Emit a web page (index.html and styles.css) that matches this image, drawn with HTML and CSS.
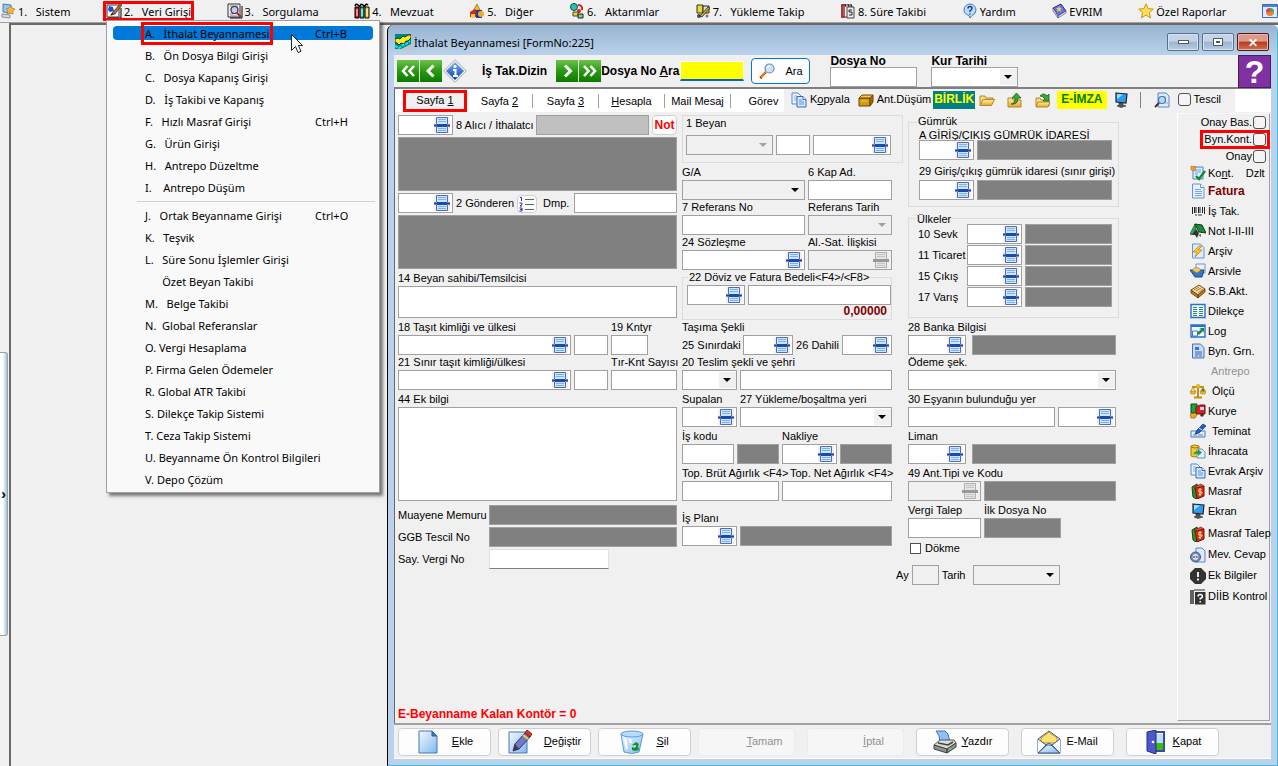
FILE: index.html
```html
<!DOCTYPE html>
<html lang="tr">
<head>
    <meta charset="UTF-8">
    <meta name="viewport" content="width=device-width, initial-scale=1.0">
    <title>İthalat Beyannamesi</title>
    <link rel="stylesheet" href="styles.css">
</head>
<body>
    <svg class="sprite" aria-hidden="true">
        <defs>
            <linearGradient id="g-green" x1="0" y1="0" x2="0" y2="1"><stop offset="0" stop-color="#6cc24a"/><stop offset=".5" stop-color="#2a9a12"/><stop offset="1" stop-color="#0b7a00"/></linearGradient>
            <linearGradient id="g-sky" x1="0" y1="0" x2="1" y2="1"><stop offset="0" stop-color="#f4faff"/><stop offset="1" stop-color="#7db8f0"/></linearGradient>
            <linearGradient id="g-gold" x1="0" y1="0" x2="0" y2="1"><stop offset="0" stop-color="#fff1a8"/><stop offset="1" stop-color="#e2a82c"/></linearGradient>
            <linearGradient id="g-blue" x1="0" y1="0" x2="0" y2="1"><stop offset="0" stop-color="#7ab2f2"/><stop offset="1" stop-color="#0b3fa8"/></linearGradient>
        </defs>
        <symbol id="i-pick" viewBox="0 0 16 16"><path d="M0 0h16v16H0z" fill="#f0f0f0"/><path d="M2.500 .5h11v15h-11z" fill="#cfe6fb" stroke="#5468b4"/><path d="M4 2.500h8M4 4.500h8M4 11.500h8M4 13.500h8" stroke="#74b4ee"/><path d="M0 7h16v3H0z" fill="#6c86c8"/><path d="M0 8h16v1H0z" fill="#1e49a8"/><path d="M3 7h10v3H3z" fill="#1e49a8"/></symbol>
        <symbol id="i-pick-off" viewBox="0 0 16 16"><path d="M2.500 .5h11v15h-11z" fill="#e4e4e4" stroke="#b0b0b0"/><path d="M4 2.500h8M4 4.500h8M4 11.500h8M4 13.500h8" stroke="#c4c4c4"/><path d="M0 7h16v3H0z" fill="#999"/></symbol>
        <symbol id="i-server" viewBox="0 0 16 16"><path d="M3 1l8 1v8l-8-1z" fill="#8fc8f4" stroke="#4a80b4"/><path d="M2 11l8 1v3l-8-1z" fill="#d8dee8" stroke="#8090a0"/><path d="M11 3l1 2 3 1-2 2 0 3-3-1-3 1 1-3-2-2 3-1z" fill="#f6b83c" stroke="#a86c10" stroke-width=".6"/></symbol>
        <symbol id="i-write" viewBox="0 0 16 16"><path d="M1 2h12v12H1z" fill="#fff" stroke="#333"/><path d="M2 15h13V5" fill="none" stroke="#000"/><path d="M3 3l4 1 1 4-4 1-2-2z" fill="#2448c8"/><path d="M5 12l2-3 7-8 2 1-7 9z" fill="#b06a40" stroke="#501c08" stroke-width=".7"/><path d="M4 13l2-3 2 1z" fill="#222"/></symbol>
        <symbol id="i-query" viewBox="0 0 16 16"><path d="M1 1h12v13H1z" fill="#eee" stroke="#333"/><path d="M3 15h12V3" fill="none" stroke="#000"/><path d="M3 3h8M3 11h3M3 13h7" stroke="#888"/><circle cx="7.500" cy="7" r="3.500" fill="#c4c8f4" stroke="#333" stroke-width="1.200"/><path d="M10 10l4 4" stroke="#b02040" stroke-width="2"/></symbol>
        <symbol id="i-books" viewBox="0 0 16 16"><path d="M1 4h4v11H1z" fill="#e01010" stroke="#000"/><path d="M6 4h4v11H6z" fill="#20b0b0" stroke="#000"/><path d="M11 4h4v11h-4z" fill="#e8d020" stroke="#000"/><path d="M1 3q1-3 3-1t2 1q1-3 3-1t2 1q1-3 3-1" fill="none" stroke="#000" stroke-width="1.500"/><path d="M3 6v7M8 6v7M13 6v7" stroke="#fff"/></symbol>
        <symbol id="i-other" viewBox="0 0 16 16"><path d="M4 8l4-7 3 6z" fill="#f0c020" stroke="#705000" stroke-width=".6"/><path d="M1 14V9l5-3 4 3v5z" fill="#d02818"/><path d="M7 7h6v8H7z" fill="#2438b0"/><circle cx="12" cy="11" r="3" fill="#e8b020"/><path d="M2 11h4v4H2z" fill="#f0d040"/></symbol>
        <symbol id="i-transfer" viewBox="0 0 16 16"><circle cx="5" cy="4" r="3.500" fill="#30c0b0" stroke="#105050"/><path d="M9 2q5 0 4 5" fill="none" stroke="#d02020" stroke-width="2"/><circle cx="10" cy="8" r="2" fill="#e02020"/><path d="M4 9h5v4H4z" fill="#f0d030" stroke="#444"/><path d="M9 11h5v4H9z" fill="#80d090" stroke="#222"/></symbol>
        <symbol id="i-load" viewBox="0 0 16 16"><path d="M2 2h6v8H2z" fill="#e8d830" stroke="#333"/><path d="M8 3h6v7H8z" fill="#ddd" stroke="#222"/><path d="M5 13l8-9 2 1-8 9z" fill="#c8b020" stroke="#222" stroke-width=".8"/><circle cx="4" cy="13" r="2" fill="#444"/><circle cx="12" cy="13" r="1.500" fill="#777"/></symbol>
        <symbol id="i-calendar" viewBox="0 0 16 16"><path d="M2 2h9v12H2z" fill="#fff" stroke="#7c1818"/><path d="M2 1v14M4 1v14" stroke="#a02020" stroke-width="1.500"/><path d="M7 4h7v11H7z" fill="#eee" stroke="#444"/><path d="M12 7H9v2h3v3H9" fill="none" stroke="#222"/><path d="M5 1l1 3M8 1l1 3M11 1l1 3" stroke="#222"/></symbol>
        <symbol id="i-help" viewBox="0 0 16 16"><path d="M8 1a6 6 0 016 6q0 4-4 5.500L8 15l-1-2.500Q2 11 2 7a6 6 0 016-6z" fill="#b8dcfa" stroke="#4a7ab0"/><path d="M6 5.500q0-2 2-2t2 1.800Q10 6.500 8 8v1M8 10.500v1" fill="none" stroke="#1a3c90" stroke-width="1.500"/></symbol>
        <symbol id="i-evrim" viewBox="0 0 16 16"><path d="M2 5l8-4 5 7-8 5z" fill="#6a72d8" stroke="#2c3080"/><path d="M2 5l5 8v2L2 8zM7 13l8-5v2l-8 5z" fill="#e8e8f4" stroke="#404080" stroke-width=".6"/><path d="M8 3l1 2 2 .5-1.500 1L10 9 8 7.500 6 9l.5-2.500L5 5.500 7.200 5z" fill="#f0d060"/></symbol>
        <symbol id="i-star" viewBox="0 0 16 16"><path d="M8 .8l2.100 4.900 5.200.4-4 3.500 1.300 5.300L8 12l-4.600 2.900 1.300-5.300-4-3.500 5.200-.4z" fill="#ffe058" stroke="#d09018"/></symbol>
        <symbol id="i-chart" viewBox="0 0 16 16"><path d="M.5 1.500h15v13H.5z" fill="#dcecfc" stroke="#3a6cb8"/><path d="M1 2h14v2H1z" fill="#4a84d8"/><circle cx="8" cy="9" r="4" fill="#f08030"/><path d="M8 9V5a4 4 0 014 4z" fill="#40b040"/><path d="M8 9H4a4 4 0 014-4z" fill="#d04080"/></symbol>
        <symbol id="i-app" viewBox="0 0 16 16"><path d="M0 0h16v15H0z" fill="#008888"/><path d="M4 16l12-6v6z" fill="#c4c4c4"/><path d="M0 8V5l3-1 2 1 3-3 2 1 3-2 3 0v3l-3 3h-2l-2 3-3-1-2 2-2-2z" fill="#f4ec20" stroke="#101010" stroke-width=".8"/><path d="M0 12l4 2 4-3 3-1 4-3" stroke="#20e0f0" stroke-width="2" fill="none" stroke-dasharray="3 1"/></symbol>
        <symbol id="i-prev2" viewBox="0 0 22 22"><path d="M0 0h22v22H0z" fill="url(#g-green)"/><path d="M10.500 6L6 11l4.500 5M17 6l-4.500 5 4.500 5" fill="none" stroke="#fff" stroke-width="2.600"/></symbol>
        <symbol id="i-prev" viewBox="0 0 22 22"><path d="M0 0h22v22H0z" fill="url(#g-green)"/><path d="M13.500 5.500L8 11l5.500 5.500" fill="none" stroke="#fff" stroke-width="3"/></symbol>
        <symbol id="i-next" viewBox="0 0 22 22"><path d="M0 0h22v22H0z" fill="url(#g-green)"/><path d="M9 5.500l5.500 5.500L9 16.500" fill="none" stroke="#fff" stroke-width="3"/></symbol>
        <symbol id="i-next2" viewBox="0 0 22 22"><path d="M0 0h22v22H0z" fill="url(#g-green)"/><path d="M5 6l4.500 5L5 16M11.500 6l4.500 5-4.500 5" fill="none" stroke="#fff" stroke-width="2.600"/></symbol>
        <symbol id="i-info" viewBox="0 0 24 24"><path d="M12 .7L23.300 12 12 23.300.7 12z" fill="#f2f2f2" stroke="#a8a8a8"/><path d="M12 3l9 9-9 9-9-9z" fill="url(#g-blue)"/><circle cx="12" cy="7.500" r="1.600" fill="#fff"/><path d="M10 11h2.500v6M10 17h5" stroke="#fff" stroke-width="2" fill="none"/></symbol>
        <symbol id="i-zoom" viewBox="0 0 16 16"><path d="M1 15l6-6" stroke="#e07818" stroke-width="2.500"/><path d="M1 14l2 2" stroke="#803808"/><circle cx="10.500" cy="5.500" r="4.500" fill="#c4e4fa" stroke="#7088b0" stroke-width="1.200"/><path d="M8 5q1-2 3-2" stroke="#fff" fill="none" stroke-width="1.500"/></symbol>
        <symbol id="i-copy" viewBox="0 0 16 16"><path d="M1 1h6l3 3v8H1z" fill="#eaf3ff" stroke="#5a86c8"/><path d="M3 4h3M3 6h4M3 8h3" stroke="#88b0e4"/><path d="M6 4.500h6l3 3V15H6z" fill="#d8e8fc" stroke="#3c68b0"/><path d="M12 4.500v3h3" fill="#fff" stroke="#3c68b0"/><path d="M8 8h3M8 10h5M8 12h5" stroke="#5a90d8"/></symbol>
        <symbol id="i-box" viewBox="0 0 16 16"><path d="M1 6h11v8H1z" fill="#d49a10" stroke="#6c4400"/><path d="M1 6l3-3h11l-3 3z" fill="#f4c848" stroke="#6c4400"/><path d="M12 6l3-3v7l-3 4z" fill="#a46c08" stroke="#6c4400"/><path d="M3 9h7" stroke="#f0c050"/></symbol>
        <symbol id="i-folder" viewBox="0 0 16 16"><path d="M1 13V4h5l1 2h7v2" fill="#f8dc84" stroke="#b88420"/><path d="M1 13.500l3-6h11.500l-3 6z" fill="url(#g-gold)" stroke="#b88420"/></symbol>
        <symbol id="i-folder-up" viewBox="0 0 16 16"><path d="M1 15V6h4l1 2h8v7z" fill="url(#g-gold)" stroke="#b88420"/><path d="M4 12q4 0 4-6H5l4.500-5L14 6h-3q0 7-7 6z" fill="#38a838" stroke="#186018" stroke-width=".8"/></symbol>
        <symbol id="i-folder-in" viewBox="0 0 16 16"><path d="M1 14V6h4l1 2h8v6z" fill="#f8dc84" stroke="#b88420"/><path d="M1 15l2-5h12l-2 5z" fill="url(#g-gold)" stroke="#b88420"/><path d="M5 4q4-4 7 0l2-2v7H8l2-2Q8 4 5 4z" fill="#38a838" stroke="#186018" stroke-width=".8"/></symbol>
        <symbol id="i-monitor" viewBox="0 0 16 16"><path d="M3 1l11 1-1 9-10-1z" fill="#2c9cf0" stroke="#222" stroke-width="1.200"/><path d="M4 2l6 .5L4 7z" fill="#9cdcff"/><path d="M6 11h4v2l3 1-5 1.500-4-1.500 2-1z" fill="#555" stroke="#333" stroke-width=".6"/></symbol>
        <symbol id="i-preview" viewBox="0 0 16 16"><path d="M4 1h8l3 3v11H4z" fill="#dcebfc" stroke="#5a86c8"/><path d="M7 5h5M11 11h3" stroke="#88b0e4"/><circle cx="8" cy="8" r="3.500" fill="#b4d8f8" stroke="#4c74b0" stroke-width="1.200"/><path d="M1 15l4-4" stroke="#4c3018" stroke-width="2"/></symbol>
        <symbol id="i-list" viewBox="0 0 16 16"><path d="M1 1.500h1.500V5M.5 7H3v1.500L1 10h2M.5 12H3v1.500H1.500H3V15H.5" fill="none" stroke="#2030b0"/><path d="M6 3.500h9M6 8.500h9M6 13.500h9" stroke="#5c6068"/></symbol>
        <symbol id="i-check" viewBox="0 0 16 16"><path d="M3 2h10v12H3z" fill="#dcecff" stroke="#4a80d0"/><path d="M5 5h6M5 7h6M5 9h3" stroke="#74a4e4"/><path d="M1 1l5 1-1 4-2-1-2 0z" fill="#f4a020" stroke="#a86010" stroke-width=".5"/><path d="M6 11l3 3 6-8" stroke="#128828" stroke-width="2.400" fill="none"/></symbol>
        <symbol id="i-page" viewBox="0 0 16 16"><path d="M2.500 1h8l3.500 3.500V15H2.500z" fill="#e6f0ff" stroke="#6c94d0"/><path d="M10.500 1v3.500H14" fill="#fff" stroke="#6c94d0"/><path d="M5 6.500h6M5 8.500h7M5 10.500h7M5 12.500h7" stroke="#7ca8e4"/></symbol>
        <symbol id="i-barcode" viewBox="0 0 16 16"><path d="M2.500 4v7M4.500 4v6M6 4v6M8.500 4v6M10 4v6M12.500 4v6M14.500 4v7" stroke="#222"/><path d="M5 12h2M8 12h4" stroke="#333"/></symbol>
        <symbol id="i-note" viewBox="0 0 16 16"><path d="M5 1l7 1 4 8-7-1z" fill="#1c8c40" stroke="#043c14"/><path d="M5 1L0 11l2 1 4-6z" fill="#30a450" stroke="#043c14" stroke-width=".6"/><path d="M2 12l4-6 3 4-2 5-2-3z" fill="#333"/><path d="M8 12l3-1v3z" fill="#666"/></symbol>
        <symbol id="i-flash" viewBox="0 0 16 16"><path d="M2.500 1h8l3.500 3.500V15H2.500z" fill="#dceaff" stroke="#6c94d0"/><path d="M9 3l-6 6h4l-2 5 7-7H8l4-4z" fill="#ffc828" stroke="#c07808" stroke-width=".7"/></symbol>
        <symbol id="i-archive" viewBox="0 0 16 16"><path d="M6 1h9v9H6z" fill="#e8f2ff" stroke="#6c94d0"/><path d="M0 7h14l-2 7H5z" fill="#3878c8" stroke="#184888"/><path d="M2 7q5-5 9 0l-4 3z" fill="#f4c858" stroke="#a07020" stroke-width=".6"/></symbol>
        <symbol id="i-card" viewBox="0 0 16 16"><path d="M1 7l8-5 6 4-7 6z" fill="#f4dca0" stroke="#7c4c10"/><path d="M1 7l7 5v3L1 10zM8 12l7-6v3l-7 6z" fill="#c07c20" stroke="#6c3c08" stroke-width=".8"/><path d="M4 7l5-3M6 8l5-3M8 10l5-4" stroke="#a87c40"/></symbol>
        <symbol id="i-sheet" viewBox="0 0 16 16"><path d="M1 1.500h14v13H1z" fill="#eef6ff" stroke="#2870c0" stroke-width="1.400"/><path d="M3 4.500h4M3 6.500h4M3 8.500h4M3 10.500h4M3 12.500h4M9 4.500h4M9 6.500h4M9 8.500h4M9 10.500h4M9 12.500h4" stroke="#2c9060" stroke-width="1.200"/></symbol>
        <symbol id="i-log" viewBox="0 0 16 16"><path d="M1 2h14v12H1z" fill="#f4faff" stroke="#2c70c8" stroke-width="1.400"/><path d="M1 2h14v2H1z" fill="#2c70c8"/><path d="M2.500 8h5v5h-5z" fill="#fff" stroke="#3878c8"/><path d="M7 10l4-4-2-1h5v5l-1-2-4 4z" fill="#188c50"/></symbol>
        <symbol id="i-form" viewBox="0 0 16 16"><path d="M2.500 1h8l3.500 3.500V15H2.500z" fill="#c8dcf8" stroke="#4870b0"/><path d="M5 4h4v3H5z" fill="#4870c0"/><path d="M5 9h7M5 11h7M5 13h3M9 13h3" stroke="#3860b0"/></symbol>
        <symbol id="i-scale" viewBox="0 0 16 16"><path d="M8 1v13M4 14.500h8M2 4h12" stroke="#c48c10" stroke-width="2"/><path d="M3 4L.5 9h5zM13 4l-2.500 5h5z" fill="none" stroke="#c89820"/><path d="M0 8h6l-1 3H1zM10 8h6l-1 3h-4z" fill="#eab828" stroke="#a07008" stroke-width=".5"/><circle cx="8" cy="3" r="2" fill="#eab828"/><circle cx="13" cy="7" r="1.500" fill="#389030"/></symbol>
        <symbol id="i-truck" viewBox="0 0 16 16"><path d="M1 1h6v9H1z" fill="#20a040" stroke="#084818"/><path d="M6 4l4-2h5v9H6z" fill="#d82020" stroke="#701010"/><path d="M10 4h4v3h-4z" fill="#b8d8f0"/><circle cx="12" cy="12" r="1.800" fill="#333"/><path d="M0 11l5-1 2 2-2 3H1z" fill="#e8b020" stroke="#906008" stroke-width=".7"/></symbol>
        <symbol id="i-cheque" viewBox="0 0 16 16"><path d="M1 8h14v6H1z" fill="#e4effc" stroke="#4878b8"/><path d="M3 12h4M8 12h5" stroke="#5080c0"/><path d="M5 11l2-4 6-6 3 2-7 7z" fill="#2060c0" stroke="#102c70" stroke-width=".7"/><path d="M9 5l3 2" stroke="#cfe0ff"/></symbol>
        <symbol id="i-export" viewBox="0 0 16 16"><path d="M1 3q3-2 8 0v10q-5 2-8 0z" fill="#f4c838" stroke="#a87808"/><path d="M1 4q4 2 8 0" fill="none" stroke="#a87808"/><path d="M7 6h5l3 3v6H7z" fill="#e4effc" stroke="#6890c8"/><path d="M3 12q1-4 5-4V6l4 3.500L8 13v-2q-3-1-5 1z" fill="#2c9c38"/></symbol>
        <symbol id="i-ledger" viewBox="0 0 16 16"><path d="M2 4l5-3 2 11-3 4-3-2z" fill="#2c9430" stroke="#104c14"/><path d="M5 5l9-2v10l-7 3z" fill="#d02c1c" stroke="#70100c"/><path d="M4 4l7-3 3 2-9 2z" fill="#e8503c" stroke="#70100c" stroke-width=".6"/><path d="M11.500 6.500q-3-1-3 1t2.500 1.500-.5 2.500l-2 0M10 5v8" stroke="#ffe890" fill="none"/></symbol>
        <symbol id="i-disc" viewBox="0 0 16 16"><path d="M6 1h6l3 3v11H6z" fill="#dceaff" stroke="#5a86c8"/><circle cx="5.500" cy="10" r="5" fill="#7c8cb8" stroke="#48547c"/><circle cx="5.500" cy="10" r="2.500" fill="#c8d0e8" stroke="#fff" stroke-width=".8"/><path d="M4 9v2M7 9v2" stroke="#333"/></symbol>
        <symbol id="i-alert" viewBox="0 0 16 16"><path d="M5 0h6l5 5v6l-5 5H5l-5-5V5z" fill="#333"/><path d="M8 4v5M8 10.500v2" stroke="#fff" stroke-width="1.800"/></symbol>
        <symbol id="i-diib" viewBox="0 0 16 16"><path d="M1 1v14M3 1v14" stroke="#333" stroke-width="1.500"/><path d="M5 3h10.500v12.500H5z" fill="#333"/><path d="M4 1h11" stroke="#333"/><path d="M8 7.500q0-2 2.200-2t2.200 1.800-2.200 2.200v1M10.200 12v1.500" fill="none" stroke="#fff" stroke-width="1.500"/></symbol>
        <symbol id="i-new" viewBox="0 0 24 24"><path d="M3 1h13l5 5v17H3z" fill="url(#g-sky)" stroke="#4a72b8"/><path d="M16 1v5h5z" fill="#3c78d0" stroke="#3058a0"/></symbol>
        <symbol id="i-edit" viewBox="0 0 24 24"><path d="M1 2h18v21H1z" fill="url(#g-sky)" stroke="#4a72b8"/><path d="M5 21l2-7L17 3l5 4-11 12z" fill="#7478c8" stroke="#30306c"/><path d="M17 3l2-3 5 4-2 3z" fill="#e03828" stroke="#802010"/><path d="M15 5l5 4" stroke="#f0d040" stroke-width="2"/><path d="M5 21l2-7 4 5z" fill="#3c3c44"/></symbol>
        <symbol id="i-bin" viewBox="0 0 24 24"><path d="M1 4l3 18q8 3 15 0l4-18z" fill="url(#g-sky)" stroke="#5a9ad8"/><ellipse cx="12" cy="4" rx="11" ry="3" fill="#b8dcf8" stroke="#5a9ad8"/><path d="M5 9l2 10M10 9l1 4" stroke="#fff" stroke-width="2"/><path d="M12 15l4-3 3 2-1 2 1 4-4 1-3-1v-3l3 1 1-2z" fill="#149428"/><path d="M14 16h2" stroke="#fff"/></symbol>
        <symbol id="i-print" viewBox="0 0 24 24"><path d="M3 1h9l3 3 2 8H7q0-7-4-11z" fill="#8cc0f8" stroke="#4470b8"/><path d="M1 15l6-5h14l2 3-9 6z" fill="#dcdcd8" stroke="#555"/><path d="M1 15l13 4v4L1 19zM14 19l9-6v4l-9 6z" fill="#909090" stroke="#444"/><path d="M5 13l10 2 5-3" fill="none" stroke="#444" stroke-width="1.500"/><circle cx="17" cy="19" r="1" fill="#60e040"/></symbol>
        <symbol id="i-mail" viewBox="0 0 24 24"><path d="M1 9l11-8 11 8v14H1z" fill="#e8f2ff" stroke="#3c5890"/><path d="M4 8l8-6 8 6v5H4z" fill="#ffe070" stroke="#b89020"/><path d="M1 9l8 6-8 8M23 9l-8 6 8 8M9 15l3-2 3 2" fill="#fff" stroke="#3c5890"/><path d="M1 23l9-8h4l9 8z" fill="url(#g-sky)" stroke="#3c5890"/></symbol>
        <symbol id="i-door" viewBox="0 0 24 24"><path d="M9 2h11v19H9z" fill="#fff" stroke="#3c48a8" stroke-width="2"/><path d="M11 4h8v9h-8z" fill="#b8e0fa"/><path d="M11 13h8v7h-8z" fill="#38c010"/><path d="M3 2l9-2v24l-9-3z" fill="#4c58c8" stroke="#242c80"/><circle cx="9" cy="12" r="1.300" fill="#fff"/></symbol>
        <symbol id="i-cursor" viewBox="0 0 12 20"><path d="M.5.500v16l4-4 2.500 6 3-1.200-2.600-5.800h4.100z" fill="#fff" stroke="#222"/></symbol>
    </svg>

    <nav class="menubar">
        <a href="#"><svg><use href="#i-server"/></svg>1.   Sistem</a>
        <div class="menu-open">
            <a href="#" class="marked"><svg><use href="#i-write"/></svg>2.   Veri Girişi</a>
            <div class="dropdown">
                <a href="#" class="active"><span class="marked">A.   İthalat Beyannamesi</span><kbd>Ctrl+B</kbd></a>
                <a href="#">B.   Ön Dosya Bilgi Girişi</a>
                <a href="#">C.   Dosya Kapanış Girişi</a>
                <a href="#">D.   İş Takibi ve Kapanış</a>
                <a href="#">F.   Hızlı Masraf Girişi<kbd>Ctrl+H</kbd></a>
                <a href="#">G.   Ürün Girişi</a>
                <a href="#">H.   Antrepo Düzeltme</a>
                <a href="#">I.    Antrepo Düşüm</a>
                <hr>
                <a href="#">J.   Ortak Beyanname Girişi<kbd>Ctrl+O</kbd></a>
                <a href="#">K.   Teşvik</a>
                <a href="#">L.   Süre Sonu İşlemler Girişi</a>
                <a href="#">      Özet Beyan Takibi</a>
                <a href="#">M.   Belge Takibi</a>
                <a href="#">N.  Global Referanslar</a>
                <a href="#">O. Vergi Hesaplama</a>
                <a href="#">P. Firma Gelen Ödemeler</a>
                <a href="#">R. Global ATR Takibi</a>
                <a href="#">S. Dilekçe Takip Sistemi</a>
                <a href="#">T. Ceza Takip Sistemi</a>
                <a href="#">U. Beyanname Ön Kontrol Bilgileri</a>
                <a href="#">V. Depo Çözüm</a>
                <svg class="cursor"><use href="#i-cursor"/></svg>
            </div>
        </div>
        <a href="#"><svg><use href="#i-query"/></svg>3.   Sorgulama</a>
        <a href="#"><svg><use href="#i-books"/></svg>4.   Mevzuat</a>
        <a href="#"><svg><use href="#i-other"/></svg>5.   Diğer</a>
        <a href="#"><svg><use href="#i-transfer"/></svg>6.   Aktarımlar</a>
        <a href="#"><svg><use href="#i-load"/></svg>7.   Yükleme Takip</a>
        <a href="#"><svg><use href="#i-calendar"/></svg>8. Süre Takibi</a>
        <a href="#"><svg><use href="#i-help"/></svg>Yardım</a>
        <a href="#"><svg><use href="#i-evrim"/></svg>EVRIM</a>
        <a href="#"><svg><use href="#i-star"/></svg>Özel Raporlar</a>
        <a href="#" aria-label="Grafik"><svg><use href="#i-chart"/></svg></a>
    </nav>

    <div class="workspace">
        <aside class="strip"><button class="splitter" aria-label="Paneli aç">›</button></aside>
        <main class="desktop">
            <section class="window">
                <header class="titlebar">
                    <svg><use href="#i-app"/></svg>
                    <h1>İthalat Beyannamesi [FormNo:225]</h1>
                    <button aria-label="Küçült"><i class="min"></i></button>
                    <button aria-label="Büyüt"><i class="max"></i></button>
                    <button class="close" aria-label="Kapat">✕</button>
                </header>

                <div class="toolbar">
                    <button class="nav" aria-label="İlk"><svg><use href="#i-prev2"/></svg></button>
                    <button class="nav" aria-label="Önceki"><svg><use href="#i-prev"/></svg></button>
                    <button class="nav info" aria-label="Bilgi"><svg><use href="#i-info"/></svg></button>
                    <b class="sort">İş Tak.Dizin</b>
                    <button class="nav" aria-label="Sonraki"><svg><use href="#i-next"/></svg></button>
                    <button class="nav" aria-label="Son"><svg><use href="#i-next2"/></svg></button>
                    <label for="search">Dosya No <u>A</u>ra</label>
                    <input id="search" class="search">
                    <button class="find"><svg><use href="#i-zoom"/></svg>Ara</button>
                    <div class="field w-87 lead"><label for="dosya">Dosya No</label><input id="dosya"></div>
                    <div class="field w-87"><label for="kur">Kur Tarihi</label><select id="kur"></select></div>
                    <button class="help" aria-label="Yardım">?</button>
                </div>

                <div class="tabs">
                    <button class="tab marked">Sayfa <u>1</u></button>
                    <button class="tab">Sayfa <u>2</u></button>
                    <button class="tab">Sayfa <u>3</u></button>
                    <button class="tab"><u>H</u>esapla</button>
                    <button class="tab">Mail Mesaj</button>
                    <button class="tab last">Görev</button>
                    <div class="tools">
                        <button><svg><use href="#i-copy"/></svg><span>K<u>o</u>pyala</span></button>
                        <button><svg><use href="#i-box"/></svg>Ant.Düşüm</button>
                        <button class="birlik">BİRLİK</button>
                        <button class="file" aria-label="Aç"><svg><use href="#i-folder"/></svg></button>
                        <button class="file" aria-label="Dışa al"><svg><use href="#i-folder-up"/></svg></button>
                        <button class="file" aria-label="İçe al"><svg><use href="#i-folder-in"/></svg></button>
                        <button class="imza">E-İMZA</button>
                        <button class="screen" aria-label="Ekran"><svg><use href="#i-monitor"/></svg></button>
                        <button class="view" aria-label="Önizleme"><svg><use href="#i-preview"/></svg></button>
                        <label><input type="checkbox">Tescil</label>
                    </div>
                </div>

                <div class="body">
                    <form class="form">
                        <div class="col">
                            <div class="stack">
                                <div class="row">
                                    <span class="pick w-55"><input id="alici"><svg><use href="#i-pick"/></svg></span>
                                    <label for="alici" class="w-77">8 Alıcı / İthalatcı</label>
                                    <input class="silver grow" readonly aria-label="Alıcı adı">
                                    <button type="button" class="not">Not</button>
                                </div>
                                <textarea class="gray tall" readonly aria-label="Alıcı adresi"></textarea>
                                <div class="row">
                                    <span class="pick w-55"><input id="gonderen"><svg><use href="#i-pick"/></svg></span>
                                    <label for="gonderen">2 Gönderen</label>
                                    <button type="button" class="list" aria-label="Liste"><svg><use href="#i-list"/></svg></button>
                                    <label for="dmp" class="w-28">Dmp.</label>
                                    <input id="dmp" class="grow">
                                </div>
                                <textarea class="gray tall" readonly aria-label="Gönderen adresi"></textarea>
                                <div class="field"><label for="beyan-sahibi">14 Beyan sahibi/Temsilcisi</label><textarea id="beyan-sahibi" class="short"></textarea></div>
                                <div>
                                    <div class="row">
                                        <div class="field grow"><label for="tasit">18 Taşıt kimliği ve ülkesi</label><span class="pick"><input id="tasit"><svg><use href="#i-pick"/></svg></span></div>
                                        <input class="w-34" aria-label="Taşıt ülkesi">
                                        <div class="field w-66"><label for="kntyr">19 Kntyr</label><input id="kntyr" class="w-37"></div>
                                    </div>
                                    <div class="row">
                                        <div class="field grow"><label for="sinir">21 Sınır taşıt kimliği/ülkesi</label><span class="pick"><input id="sinir"><svg><use href="#i-pick"/></svg></span></div>
                                        <input class="w-34" aria-label="Sınır taşıt ülkesi">
                                        <div class="field w-66"><label for="knt">Tır-Knt Sayısı</label><input id="knt"></div>
                                    </div>
                                </div>
                                <div class="field"><label for="ek">44 Ek bilgi</label><textarea id="ek" class="notes"></textarea></div>
                            </div>
                            <div class="stack tail">
                                <div class="row"><label for="muayene" class="w-88">Muayene Memuru</label><input id="muayene" class="gray grow" readonly></div>
                                <div class="row"><label for="ggb" class="w-88">GGB Tescil No</label><input id="ggb" class="gray grow" readonly></div>
                                <div class="row"><label for="vergi" class="w-88">Say. Vergi No</label><input id="vergi" class="flat"></div>
                            </div>
                            <p class="status">E-Beyanname Kalan Kontör = 0</p>
                        </div>

                        <div class="col">
                            <div class="stack">
                                <div class="box">
                                    <label for="rejim">1 Beyan</label>
                                    <div class="row">
                                        <select id="rejim" class="w-87" disabled></select>
                                        <input class="w-34" aria-label="Beyan kodu">
                                        <span class="pick grow"><input aria-label="Beyan türü"><svg><use href="#i-pick"/></svg></span>
                                    </div>
                                </div>
                                <div class="narrow">
                                    <div class="row">
                                        <div class="field grow"><label for="ga">G/A</label><select id="ga" class="dim"></select></div>
                                        <div class="field w-84"><label for="kap">6 Kap Ad.</label><input id="kap"></div>
                                    </div>
                                    <div class="row">
                                        <div class="field grow"><label for="ref">7 Referans No</label><input id="ref"></div>
                                        <div class="field w-84"><label for="reft">Referans Tarih</label><select id="reft" disabled></select></div>
                                    </div>
                                    <div class="row">
                                        <div class="field grow"><label for="soz">24 Sözleşme</label><span class="pick"><input id="soz"><svg><use href="#i-pick"/></svg></span></div>
                                        <div class="field w-84"><label for="als">Al.-Sat. İlişkisi</label><span class="pick off"><input id="als" disabled><svg><use href="#i-pick-off"/></svg></span></div>
                                    </div>
                                    <fieldset class="money">
                                        <legend>22 Döviz ve Fatura Bedeli&lt;F4&gt;/&lt;F8&gt;</legend>
                                        <div class="row">
                                            <span class="pick w-58"><input aria-label="Döviz"><svg><use href="#i-pick"/></svg></span>
                                            <input class="grow" aria-label="Fatura bedeli">
                                        </div>
                                        <output>0,00000</output>
                                    </fieldset>
                                    <p class="caption">Taşıma Şekli</p>
                                    <div class="row">
                                        <label for="sinirdaki" class="w-58">25 Sınırdaki</label>
                                        <span class="pick grow"><input id="sinirdaki"><svg><use href="#i-pick"/></svg></span>
                                        <label for="dahili">26 Dahili</label>
                                        <span class="pick grow"><input id="dahili"><svg><use href="#i-pick"/></svg></span>
                                    </div>
                                    <div class="row">
                                        <div class="field w-55"><label for="teslim">20 Teslim şekli ve şehri</label><select id="teslim"></select></div>
                                        <input class="grow" aria-label="Teslim şehri">
                                    </div>
                                </div>
                                <div class="row narrow">
                                    <div class="field w-55"><label for="supalan">Supalan</label><span class="pick"><input id="supalan"><svg><use href="#i-pick"/></svg></span></div>
                                    <div class="field grow"><label for="yukleme">27 Yükleme/boşaltma yeri</label><select id="yukleme"></select></div>
                                </div>
                                <div class="row narrow">
                                    <div class="field grow"><label for="iskodu">İş kodu</label><div class="row"><input id="iskodu" class="w-52"><input class="gray grow" readonly aria-label="İş adı"></div></div>
                                    <div class="field w-110"><label for="nakliye">Nakliye</label><div class="row"><span class="pick w-55"><input id="nakliye"><svg><use href="#i-pick"/></svg></span><input class="gray grow" readonly aria-label="Nakliye adı"></div></div>
                                </div>
                                <div class="row narrow">
                                    <div class="field grow"><label for="brut">Top. Brüt Ağırlık &lt;F4&gt;</label><input id="brut"></div>
                                    <div class="field w-110 indent"><label for="net">Top. Net Ağırlık &lt;F4&gt;</label><input id="net"></div>
                                </div>
                                <div class="row narrow plan">
                                    <div class="field w-55"><label for="plan">İş Planı</label><span class="pick"><input id="plan"><svg><use href="#i-pick"/></svg></span></div>
                                    <input class="gray grow" readonly aria-label="İş planı adı">
                                </div>
                            </div>
                        </div>

                        <div class="col">
                            <fieldset class="customs">
                                <legend>Gümrük</legend>
                                <label for="gumruk">A GİRİŞ/ÇIKIŞ GÜMRÜK İDARESİ</label>
                                <div class="row"><span class="pick w-55"><input id="gumruk"><svg><use href="#i-pick"/></svg></span><input class="gray grow" readonly aria-label="Gümrük idaresi adı"></div>
                                <label for="gumruk2" class="second">29 Giriş/çıkış gümrük idaresi (sınır girişi)</label>
                                <div class="row"><span class="pick w-55"><input id="gumruk2"><svg><use href="#i-pick"/></svg></span><input class="gray grow" readonly aria-label="Sınır gümrük adı"></div>
                            </fieldset>
                            <fieldset class="countries">
                                <legend>Ülkeler</legend>
                                <div class="row"><label for="sevk" class="w-46">10 Sevk</label><span class="pick w-55"><input id="sevk"><svg><use href="#i-pick"/></svg></span><input class="gray grow" readonly aria-label="Sevk ülkesi"></div>
                                <div class="row"><label for="ticaret" class="w-46">11 Ticaret</label><span class="pick w-55"><input id="ticaret"><svg><use href="#i-pick"/></svg></span><input class="gray grow" readonly aria-label="Ticaret ülkesi"></div>
                                <div class="row"><label for="cikis" class="w-46">15 Çıkış</label><span class="pick w-55"><input id="cikis"><svg><use href="#i-pick"/></svg></span><input class="gray grow" readonly aria-label="Çıkış ülkesi"></div>
                                <div class="row"><label for="varis" class="w-46">17 Varış</label><span class="pick w-55"><input id="varis"><svg><use href="#i-pick"/></svg></span><input class="gray grow" readonly aria-label="Varış ülkesi"></div>
                            </fieldset>
                            <div class="stack">
                                <div>
                                    <div class="row wide">
                                        <div class="field w-58"><label for="banka">28 Banka Bilgisi</label><span class="pick"><input id="banka"><svg><use href="#i-pick"/></svg></span></div>
                                        <input class="gray grow" readonly aria-label="Banka adı">
                                    </div>
                                    <div class="field"><label for="odeme">Ödeme şek.</label><select id="odeme"></select></div>
                                </div>
                                <div class="row">
                                    <div class="field grow"><label for="esya">30 Eşyanın bulunduğu yer</label><input id="esya"></div>
                                    <span class="pick w-58"><input aria-label="Yer kodu"><svg><use href="#i-pick"/></svg></span>
                                </div>
                                <div class="row wide">
                                    <div class="field w-58"><label for="liman">Liman</label><span class="pick"><input id="liman"><svg><use href="#i-pick"/></svg></span></div>
                                    <input class="gray grow" readonly aria-label="Liman adı">
                                </div>
                                <div class="row">
                                    <div class="field w-73"><label for="antrepo">49 Ant.Tipi ve Kodu</label><span class="pick off"><input id="antrepo" disabled><svg><use href="#i-pick-off"/></svg></span></div>
                                    <input class="gray grow" readonly aria-label="Antrepo adı">
                                </div>
                                <div class="row">
                                    <div class="field w-73"><label for="talep">Vergi Talep</label><input id="talep"></div>
                                    <div class="field w-77"><label for="ilk">İlk Dosya No</label><input id="ilk" class="gray" readonly></div>
                                </div>
                            </div>
                            <label class="bulk"><input type="checkbox">Dökme</label>
                            <div class="row period">
                                <label for="ay">Ay</label><input id="ay" class="w-27 dim">
                                <label for="tarih" class="w-28">Tarih</label><select id="tarih" class="w-87 dim"></select>
                            </div>
                        </div>
                    </form>

                    <aside class="side">
                        <label>Onay Bas.<input type="checkbox"></label>
                        <label class="marked">Byn.Kont.<input type="checkbox"></label>
                        <label>Onay<input type="checkbox"></label>
                        <div class="pair"><button><svg><use href="#i-check"/></svg><span>Ko<u>n</u>t.</span></button><button>Dzlt</button></div>
                        <button class="fatura"><svg><use href="#i-page"/></svg>Fatura</button>
                        <button><svg><use href="#i-barcode"/></svg>İş Tak.</button>
                        <button><svg><use href="#i-note"/></svg>Not I-II-III</button>
                        <button><svg><use href="#i-flash"/></svg>Arşiv</button>
                        <button><svg><use href="#i-archive"/></svg>Arsivle</button>
                        <button><svg><use href="#i-card"/></svg>S.B.Akt.</button>
                        <button><svg><use href="#i-sheet"/></svg>Dilekçe</button>
                        <button><svg><use href="#i-log"/></svg>Log</button>
                        <button><svg><use href="#i-form"/></svg>Byn. Grn.</button>
                        <button disabled><svg></svg>Antrepo</button>
                        <button class="inset"><svg><use href="#i-scale"/></svg>Ölçü</button>
                        <button><svg><use href="#i-truck"/></svg>Kurye</button>
                        <button class="inset"><svg><use href="#i-cheque"/></svg>Teminat</button>
                        <button><svg><use href="#i-export"/></svg>İhracata</button>
                        <button><svg><use href="#i-copy"/></svg>Evrak Arşiv</button>
                        <button><svg><use href="#i-ledger"/></svg>Masraf</button>
                        <button><svg><use href="#i-monitor"/></svg>Ekran</button>
                        <div class="more">
                            <button><svg><use href="#i-ledger"/></svg>Masraf Talep</button>
                            <button><svg><use href="#i-disc"/></svg>Mev. Cevap</button>
                            <button><svg><use href="#i-alert"/></svg>Ek Bilgiler</button>
                            <button><svg><use href="#i-diib"/></svg>DİİB Kontrol</button>
                        </div>
                    </aside>
                </div>

                <footer class="actions">
                    <button><svg><use href="#i-new"/></svg><span><u>E</u>kle</span></button>
                    <button><svg><use href="#i-edit"/></svg><span><u>D</u>eğiştir</span></button>
                    <button><svg><use href="#i-bin"/></svg><span><u>S</u>il</span></button>
                    <button disabled><svg></svg><span><u>T</u>amam</span></button>
                    <button disabled><svg></svg><span><u>İ</u>ptal</span></button>
                    <button class="close-set"><svg><use href="#i-print"/></svg><span><u>Y</u>azdır</span></button>
                    <button class="close-set"><svg><use href="#i-mail"/></svg><span>E-Mail</span></button>
                    <button class="close-set"><svg><use href="#i-door"/></svg><span><u>K</u>apat</span></button>
                </footer>
            </section>
        </main>
    </div>
</body>
</html>
```

FILE: styles.css
```css
* {
    box-sizing: border-box;
}
body {
    margin: 0;
    height: 100vh;
    overflow: hidden;
    display: flex;
    flex-direction: column;
    background-color: #f0f0f0;
    color: #000000;
    font-family: "Liberation Sans", Arial, sans-serif;
    font-size: 11px;
    line-height: 15px;
}
.sprite {
    position: absolute;
    width: 0;
    height: 0;
}
svg {
    width: 16px;
    height: 16px;
    flex: none;
    display: block;
}
a {
    color: inherit;
    text-decoration: none;
}
button {
    font: inherit;
    color: inherit;
    background: none;
    border: none;
    padding: 0;
    white-space: nowrap;
}
p {
    margin: 0;
}

/* menu bar */
.menubar {
    height: 22px;
    flex: none;
    display: flex;
    justify-content: space-between;
    align-items: center;
    font-family: "Noto Sans", sans-serif;
}
.menubar > a, .menu-open > a {
    display: flex;
    align-items: center;
    gap: 2px;
    height: 14px;
    white-space: pre;
}
.menu-open {
    position: relative;
}
.marked {
    outline: 3px solid #ff0000;
    outline-offset: -2px;
}
.menu-open > .marked {
    outline-offset: 0;
}
.dropdown {
    position: absolute;
    z-index: 5;
    top: 16px;
    left: 0;
    width: 274px;
    padding: 1px 2px 2px;
    background-color: #f9f9f9;
    border: 1px solid #a0a0a0;
    box-shadow: 3px 3px 3px rgba(0, 0, 0, 0.5);
}
.dropdown a {
    display: flex;
    align-items: center;
    justify-content: space-between;
    height: 22px;
    padding: 0 26px 0 36px;
    white-space: pre;
}
.dropdown .active {
    height: 14px;
    margin: 4px;
    padding: 0 22px 0 32px;
    border-radius: 4px;
    background-color: #0078d7;
}
.active .marked {
    outline-offset: 1px;
}
.dropdown kbd {
    font-family: inherit;
    width: 36px;
}
.dropdown hr {
    margin: 3px 2px 2px 28px;
    border: none;
    border-top: 1px solid #d0d0d0;
}
.cursor {
    position: absolute;
    left: 184px;
    top: 13px;
    width: 12px;
    height: 20px;
}

/* workspace */
.workspace {
    flex: 1;
    min-height: 0;
    display: flex;
    border-top: 1px solid #a0a0a0;
}
.strip {
    width: 9px;
    flex: none;
    padding-top: 329px;
}
.splitter {
    width: 8px;
    height: 284px;
    border: 1px solid #a0a0a0;
    border-left: none;
    border-radius: 0 3px 3px 0;
    background: linear-gradient(to right, #ffffff 40%, #9cc4e0);
    font-size: 14px;
    font-weight: bold;
}
.desktop {
    flex: 1;
    min-width: 0;
    display: flex;
    padding-left: 376px;
    border-left: 2px solid #696969;
    border-top: 2px solid #696969;
}
.window {
    flex: 1;
    min-width: 0;
    display: flex;
    flex-direction: column;
    padding: 0 6px 6px 6px;
    border: 1px solid #38c0e0;
    border-left-color: #000000;
    border-top: none;
    border-radius: 6px 6px 0 0;
    background: linear-gradient(#99b4d1, #b9d1ea 30px);
}
.titlebar {
    height: 30px;
    flex: none;
    display: flex;
    align-items: center;
    gap: 3px;
    padding: 4px 2px 0 1px;
    font-family: "Noto Sans", sans-serif;
}
.titlebar h1 {
    flex: 1;
    margin: 0;
    font-size: 11px;
    font-weight: normal;
}
.titlebar button {
    width: 32px;
    height: 18px;
    display: grid;
    place-items: center;
    border: 1px solid #5c708c;
    border-radius: 2px;
    box-shadow: inset 0 0 0 1px #d4e2f0;
    background: linear-gradient(#c4d4e6 45%, #9cb4d0 50%, #b8cce4);
}
.titlebar .close {
    background: linear-gradient(#e09888 45%, #b83820 50%, #d07050);
    box-shadow: inset 0 0 0 1px #e8b4a8;
    border-color: #501810;
    color: #ffffff;
    font-size: 12px;
    font-weight: bold;
}
.min, .max {
    width: 11px;
    height: 4px;
    background-color: #ffffff;
    border: 1px solid #505860;
}
.max {
    width: 10px;
    height: 8px;
    box-shadow: inset 0 0 0 2px #ffffff;
    background-color: #505860;
}

/* toolbar */
.toolbar {
    height: 34px;
    flex: none;
    display: flex;
    align-items: center;
    background-color: #f0f0f0;
    padding-left: 3px;
    border-bottom: 2px solid #808080;
    font-size: 12px;
    font-weight: bold;
}
.nav svg {
    width: 22px;
    height: 22px;
}
.nav + .nav {
    margin-left: 1px;
}
.info svg {
    width: 24px;
    height: 24px;
}
.sort {
    margin: 0 9px 0 15px;
}
.toolbar .search {
    width: 64px;
    height: 20px;
    margin-left: 1px;
    background-color: #ffff00;
    border: 1px solid #ffffff;
    border-bottom: 2px solid #0067c0;
}
.find {
    width: 59px;
    height: 26px;
    margin-left: 7px;
    display: flex;
    align-items: center;
    gap: 10px;
    padding-left: 7px;
    border: 1px solid #0078d7;
    border-radius: 4px;
    background-color: #fdfdfd;
    font-size: 11px;
    font-weight: normal;
}
.toolbar .field {
    margin-left: 14px;
}
.toolbar .lead {
    margin-left: 20px;
}
.toolbar .field label {
    line-height: 12px;
    height: 12px;
}
.help {
    width: 33px;
    height: 33px;
    margin-left: auto;
    align-self: flex-start;
    border: 1px solid #402060;
    background-color: #8030a0;
    color: #ffffff;
    font-size: 32px;
    line-height: 30px;
    font-weight: bold;
}

/* tabs */
.tabs {
    height: 23px;
    flex: none;
    display: flex;
    align-items: center;
    background-color: #ffffff;
    border-left: 1px solid #696969;
    padding-left: 8px;
}
.tab {
    width: 66px;
    height: 14px;
    border-right: 1px solid #a0a0a0;
}
.tab.marked {
    height: 22px;
    border: none;
    width: 64px;
    outline-offset: -3px;
    background-color: #f0f0f0;
}
.tab.last {
    width: 53px;
    border: none;
    padding-left: 12px;
}
.tools {
    height: 23px;
    display: flex;
    align-items: center;
    padding: 0 14px 2px 7px;
    background-color: #f0f0f0;
}
.tools button, .tools label {
    display: flex;
    align-items: center;
    gap: 3px;
    margin-right: 8px;
}
.tools .birlik, .tools .imza {
    height: 18px;
    padding: 0 1px;
    background-color: #008080;
    color: #ffff00;
    font-size: 12px;
    font-weight: bold;
    margin: 0 4px 0 -6px;
}
.tools .imza {
    padding: 0 4px;
    margin: 0 6px 0 -6px;
    background-color: #ffff00;
    color: #008000;
}
.tools .file {
    margin-right: 12px;
}
.tools .view {
    margin-left: 3px;
    padding-left: 13px;
    border-left: 1px solid #808080;
}
.tools label {
    margin: 0;
}

/* form controls */
input, select, textarea {
    font: inherit;
    display: block;
    min-width: 0;
    width: 100%;
    height: 20px;
    margin: 0;
    padding: 0 3px;
    border: 1px solid #a0a0a0;
    border-radius: 0;
    background-color: #ffffff;
    resize: none;
    outline: none;
}
input[type="checkbox"] {
    appearance: none;
    width: 13px;
    height: 13px;
    padding: 0;
    flex: none;
    border: 1px solid #505050;
    border-radius: 3px;
    background-color: #f4f4f4;
}
select {
    appearance: none;
    background-image: url("data:image/svg+xml,%3Csvg xmlns='http://www.w3.org/2000/svg' width='17' height='18'%3E%3Cpath d='M0 1h17v16H0z' fill='%23f0f0f0'/%3E%3Cpath d='M4 7h8l-4 4z'/%3E%3C/svg%3E");
    background-repeat: no-repeat;
    background-position: right center;
}
select:disabled {
    background-color: #f0f0f0;
    opacity: 1;
    background-image: url("data:image/svg+xml,%3Csvg xmlns='http://www.w3.org/2000/svg' width='17' height='18'%3E%3Cpath d='M4 7h8l-4 4z' fill='%23a0a0a0'/%3E%3C/svg%3E");
}
.dim {
    background-color: #f0f0f0;
}
.gray {
    background-color: #808080;
}
.silver {
    background-color: #c0c0c0;
}
.pick {
    display: flex;
    align-items: center;
    height: 20px;
    min-width: 0;
    padding-right: 2px;
    border: 1px solid #a0a0a0;
    background-color: #ffffff;
}
.pick input {
    flex: 1;
    height: 18px;
    border: none;
}
.off, .off input {
    background-color: #f0f0f0;
}
label, legend {
    white-space: nowrap;
}
.field {
    min-width: 0;
}
.field > label {
    display: block;
    height: 15px;
}
.indent > label {
    padding-left: 8px;
}
.row {
    display: flex;
    align-items: flex-end;
    gap: 3px;
}
.row > label {
    line-height: 20px;
    min-width: 0;
}
.row > .grow {
    flex: 1;
}
.row > .w-27 { flex: 0 0 27px; }
.row > .w-28 { flex: 0 0 28px; }
.row > .w-34 { flex: 0 0 34px; }
.w-37 { width: 37px; }
.row > .w-46 { flex: 0 0 46px; }
.row > .w-52 { flex: 0 0 52px; }
.row > .w-55 { flex: 0 0 55px; }
.row > .w-58 { flex: 0 0 58px; }
.row > .w-66 { flex: 0 0 66px; }
.row > .w-73 { flex: 0 0 73px; }
.row > .w-77 { flex: 0 0 77px; }
.row > .w-84 { flex: 0 0 84px; }
.row > .w-87 { flex: 0 0 87px; }
.row > .w-88 { flex: 0 0 88px; }
.row > .w-110 { flex: 0 0 110px; }
.toolbar .w-87 { width: 87px; }

/* declaration form */
.body {
    flex: 1;
    min-height: 0;
    display: flex;
    background-color: #f0f0f0;
    border-left: 1px solid #696969;
}
.form {
    flex: 1;
    min-width: 0;
    display: grid;
    grid-template-columns: 279fr 221fr 211fr;
    gap: 5px;
    padding: 3px 58px 0 3px;
}
.col {
    min-width: 0;
    display: flex;
    flex-direction: column;
}
.stack {
    display: flex;
    flex-direction: column;
    gap: 2px;
}
.tail {
    margin-top: 4px;
}
.tall {
    height: 54px;
}
.short {
    height: 32px;
}
.notes {
    height: 94px;
}
.not {
    width: 25px;
    height: 20px;
    border: 1px solid #d0d0d0;
    border-radius: 4px;
    background-color: #fdfdfd;
    color: #ff0000;
    font-size: 12px;
    font-weight: bold;
}
.list {
    width: 20px;
    height: 18px;
    padding: 0 1px;
    border: 1px solid #d0d0d0;
    border-radius: 4px;
    background-color: #fdfdfd;
}
.row .list {
    margin-right: 3px;
}
.flat {
    width: 120px;
    border-color: #e0e0e0;
    border-bottom-color: #808080;
}
.status {
    margin-top: auto;
    padding-bottom: 1px;
    color: #ff0000;
    font-size: 12px;
    font-weight: bold;
    white-space: nowrap;
}
.box {
    height: 48px;
    padding: 0 11px 0 3px;
    border: 1px solid #dcdcdc;
}
.box label {
    display: block;
    height: 19px;
}
.narrow {
    margin-right: 11px;
}
.caption {
    height: 15px;
}
fieldset {
    min-width: 0;
    margin: 0;
    padding: 0;
    border: 1px solid #dcdcdc;
}
legend {
    height: 15px;
    margin-left: 1px;
    padding: 0 1px;
}
.money {
    padding: 0 0 0 4px;
    height: 50px;
}
.money output {
    display: block;
    padding-right: 4px;
    text-align: right;
    font-size: 12px;
    line-height: 13px;
    font-weight: bold;
    color: #800000;
}
.customs {
    height: 92px;
    padding: 0 6px 0 10px;
}
.customs legend, .countries legend {
    margin-left: -2px;
    line-height: 12px;
    height: 14px;
}
.customs label {
    display: block;
    line-height: 12px;
    height: 11px;
}
.customs .second {
    margin-top: 3px;
    line-height: 17px;
    height: 17px;
}
.countries {
    height: 105px;
    margin: 6px 0 2px;
    padding: 0 6px 0 9px;
}
.countries legend {
    height: 11px;
}
.countries .row + .row {
    margin-top: 1px;
}
.col:last-child .stack {
    margin-right: 3px;
}
.wide {
    gap: 6px;
}
.plan {
    margin-top: 8px;
}
.bulk {
    display: flex;
    align-items: center;
    gap: 4px;
    margin: 3px 0 9px 2px;
}
.bulk input[type="checkbox"] {
    width: 11px;
    height: 11px;
    border-radius: 0;
    background-color: #ffffff;
}
.period {
    margin-left: -12px;
}

/* right button column */
.side {
    width: 93px;
    flex: none;
    display: flex;
    flex-direction: column;
    margin: 1px 1px 2px 0;
    border: 1px solid #a0a0a0;
    border-top-color: #f8f8f8;
    border-left: 1px solid #ffffff;
}
.side label {
    height: 17px;
    display: flex;
    align-items: center;
    align-self: flex-end;
    gap: 1px;
    padding: 0 3px;
}
.side button {
    height: 20px;
    display: flex;
    align-items: center;
    gap: 2px;
    padding-left: 12px;
}
.side button:disabled {
    color: #909090;
    gap: 5px;
}
.side .inset {
    gap: 6px;
}
.side .fatura {
    color: #800000;
    font-size: 12px;
    font-weight: bold;
}
.pair {
    display: flex;
}
.side .pair button {
    height: 16px;
}
.more {
    margin-top: 2px;
}
.more button {
    height: 21px;
}

/* bottom buttons */
.actions {
    height: 36px;
    flex: none;
    display: flex;
    gap: 7px;
    align-items: center;
    padding-left: 4px;
    background-color: #f0f0f0;
    border-top: 2px solid #a0a0a0;
    border-bottom: 1px solid #ffffff;
}
.actions button {
    width: 93px;
    height: 28px;
    display: flex;
    align-items: center;
    justify-content: center;
    gap: 12px;
    border: 1px solid #d0d0d0;
    border-radius: 4px;
    background-color: #fdfdfd;
}
.actions button:disabled {
    width: 97px;
    color: #909090;
    background-color: #f6f6f6;
    border-color: #ebebeb;
}
.actions button:nth-child(n+5) {
    margin-left: 5px;
}
.actions .close-set {
    gap: 5px;
}
.actions svg {
    width: 24px;
    height: 24px;
}
```
